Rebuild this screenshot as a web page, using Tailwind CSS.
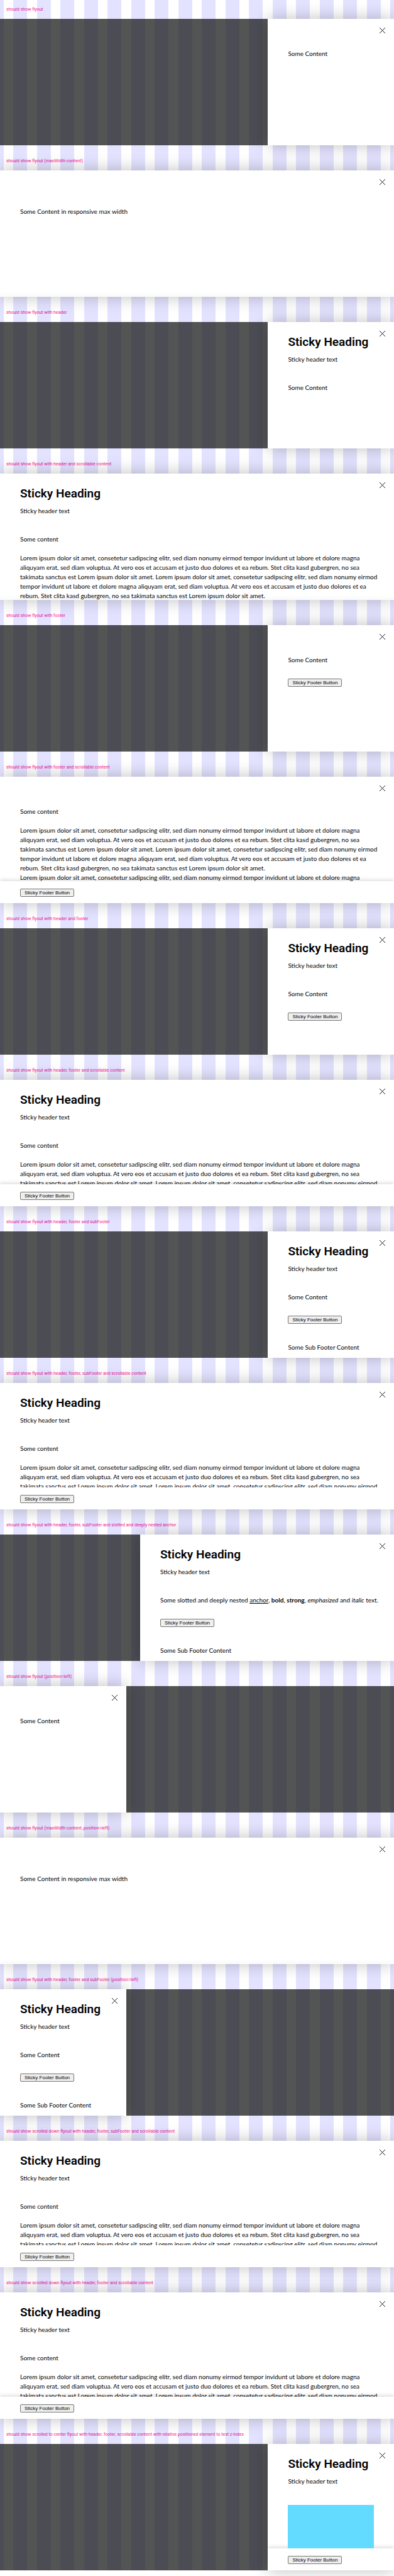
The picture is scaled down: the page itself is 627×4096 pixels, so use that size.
<!DOCTYPE html>
<html lang="en">
<head>
<meta charset="utf-8">
<meta name="viewport" content="width=device-width, initial-scale=1">
<title>Flyout</title>
<script src="https://cdn.jsdelivr.net/npm/@tailwindcss/browser@4"></script>
</head>
<body class="bg-white">
<svg class="hidden" aria-hidden="true"><symbol id="x" viewBox="0 0 15 15"><path d="M3 3 L12 12 M12 3 L3 12" fill="none" stroke="#010205" stroke-width="0.9"/></symbol></svg>

<main class="relative font-[Lato,sans-serif] text-[10px] leading-[15px] text-[#010205]
 [&>section>h1]:flex [&>section>h1]:h-[30px] [&>section>h1]:items-center [&>section>h1]:pl-[10px] [&>section>h1]:font-[Roboto,sans-serif] [&>section>h1]:text-[7px] [&>section>h1]:whitespace-nowrap [&>section>h1]:text-[#ff1493]
 [&>section>div]:relative [&>section>div]:z-10 [&>section>div]:mb-[10px] [&>section>div]:flex [&>section>div]:h-[201px] [&>section>div]:bg-[#1a1b1b]/75
 [&_aside]:relative [&_aside]:flex [&_aside]:flex-col [&_aside]:overflow-hidden [&_aside]:bg-white [&_aside]:whitespace-nowrap [&_aside]:shadow-[0_0_25px_rgba(0,0,0,0.26)]
 [&_header]:px-8 [&_header]:pt-5 [&_h2]:mb-2 [&_h2]:font-[Roboto,sans-serif] [&_h2]:text-[19px] [&_h2]:leading-6 [&_h2]:font-semibold
 [&_article]:px-8 [&_article]:pb-[10px] [&_header+article]:mt-[30px]
 [&_footer]:flex [&_footer]:bg-white [&_footer]:px-8 [&_footer]:pt-3 [&_footer]:pb-[10px]
 [&_footer_button]:h-[13px] [&_footer_button]:rounded-[2px] [&_footer_button]:border [&_footer_button]:border-[#767676] [&_footer_button]:bg-[#efefef] [&_footer_button]:px-[6px] [&_footer_button]:font-['Liberation_Sans',Arial,sans-serif] [&_footer_button]:text-[8px] [&_footer_button]:leading-[11px] [&_footer_button]:text-black
 [&_aside>button]:absolute [&_aside>button]:top-[11px] [&_aside>button]:right-[11px] [&_aside>button]:size-[15px] [&_aside>button>svg]:size-full">

<section><h1>should show flyout</h1><div class="justify-end"><aside class="w-[32%]">
<button type="button" aria-label="Close"><svg><use href="#x"/></svg></button>
<article class="mt-12"><p>Some Content</p></article>
</aside></div></section>

<section><h1>should show flyout (maxWidth content)</h1><div><aside class="w-full">
<button type="button" aria-label="Close"><svg><use href="#x"/></svg></button>
<article class="mt-[58px] flex-1"><p>Some Content in responsive max width</p></article>
<div class="h-px translate-y-px bg-white shadow-[0_-2px_6px_rgba(0,0,0,0.14)]"></div>
</aside></div></section>

<section><h1>should show flyout with header</h1><div class="justify-end"><aside class="w-[32%]">
<button type="button" aria-label="Close"><svg><use href="#x"/></svg></button>
<header><h2>Sticky Heading</h2><p>Sticky header text</p></header>
<article><p>Some Content</p></article>
</aside></div></section>

<section><h1>should show flyout with header and scrollable content</h1><div><aside class="w-full">
<button type="button" aria-label="Close"><svg><use href="#x"/></svg></button>
<header><h2>Sticky Heading</h2><p>Sticky header text</p></header>
<article class="min-h-0 flex-1"><p class="mb-[15px]">Some content</p>
<p>Lorem ipsum dolor sit amet, consetetur sadipscing elitr, sed diam nonumy eirmod tempor invidunt ut labore et dolore magna<br>aliquyam erat, sed diam voluptua. At vero eos et accusam et justo duo dolores et ea rebum. Stet clita kasd gubergren, no sea<br>takimata sanctus est Lorem ipsum dolor sit amet. Lorem ipsum dolor sit amet, consetetur sadipscing elitr, sed diam nonumy eirmod<br>tempor invidunt ut labore et dolore magna aliquyam erat, sed diam voluptua. At vero eos et accusam et justo duo dolores et ea<br>rebum. Stet clita kasd gubergren, no sea takimata sanctus est Lorem ipsum dolor sit amet.</p></article>
<div class="h-px translate-y-px bg-white shadow-[0_-2px_6px_rgba(0,0,0,0.14)]"></div>
</aside></div></section>

<section><h1>should show flyout with footer</h1><div class="justify-end"><aside class="w-[32%]">
<button type="button" aria-label="Close"><svg><use href="#x"/></svg></button>
<article class="mt-12"><p>Some Content</p></article>
<footer><button type="button">Sticky Footer Button</button></footer>
</aside></div></section>

<section><h1>should show flyout with footer and scrollable content</h1><div><aside class="w-full">
<button type="button" aria-label="Close"><svg><use href="#x"/></svg></button>
<article class="mt-12 min-h-0 flex-1"><p class="mb-[15px]">Some content</p>
<p>Lorem ipsum dolor sit amet, consetetur sadipscing elitr, sed diam nonumy eirmod tempor invidunt ut labore et dolore magna<br>aliquyam erat, sed diam voluptua. At vero eos et accusam et justo duo dolores et ea rebum. Stet clita kasd gubergren, no sea<br>takimata sanctus est Lorem ipsum dolor sit amet. Lorem ipsum dolor sit amet, consetetur sadipscing elitr, sed diam nonumy eirmod<br>tempor invidunt ut labore et dolore magna aliquyam erat, sed diam voluptua. At vero eos et accusam et justo duo dolores et ea<br>rebum. Stet clita kasd gubergren, no sea takimata sanctus est Lorem ipsum dolor sit amet.<br>Lorem ipsum dolor sit amet, consetetur sadipscing elitr, sed diam nonumy eirmod tempor invidunt ut labore et dolore magna</p></article>
<footer class="relative shadow-[0_-2px_6px_rgba(0,0,0,0.14)]"><button type="button">Sticky Footer Button</button></footer>
</aside></div></section>

<section><h1>should show flyout with header and footer</h1><div class="justify-end"><aside class="w-[32%]">
<button type="button" aria-label="Close"><svg><use href="#x"/></svg></button>
<header><h2>Sticky Heading</h2><p>Sticky header text</p></header>
<article><p>Some Content</p></article>
<footer><button type="button">Sticky Footer Button</button></footer>
</aside></div></section>

<section><h1>should show flyout with header, footer and scrollable content</h1><div><aside class="w-full">
<button type="button" aria-label="Close"><svg><use href="#x"/></svg></button>
<header><h2>Sticky Heading</h2><p>Sticky header text</p></header>
<article class="min-h-0 flex-1"><p class="mb-[15px]">Some content</p>
<p>Lorem ipsum dolor sit amet, consetetur sadipscing elitr, sed diam nonumy eirmod tempor invidunt ut labore et dolore magna<br>aliquyam erat, sed diam voluptua. At vero eos et accusam et justo duo dolores et ea rebum. Stet clita kasd gubergren, no sea<br>takimata sanctus est Lorem ipsum dolor sit amet. Lorem ipsum dolor sit amet, consetetur sadipscing elitr, sed diam nonumy eirmod</p></article>
<footer class="relative shadow-[0_-2px_6px_rgba(0,0,0,0.14)]"><button type="button">Sticky Footer Button</button></footer>
</aside></div></section>

<section><h1>should show flyout with header, footer and subFooter</h1><div class="justify-end"><aside class="w-[32%]">
<button type="button" aria-label="Close"><svg><use href="#x"/></svg></button>
<header><h2>Sticky Heading</h2><p>Sticky header text</p></header>
<article><p>Some Content</p></article>
<footer><button type="button">Sticky Footer Button</button></footer>
<p class="px-8 pt-5">Some Sub Footer Content</p>
</aside></div></section>

<section><h1>should show flyout with header, footer, subFooter and scrollable content</h1><div><aside class="w-full">
<button type="button" aria-label="Close"><svg><use href="#x"/></svg></button>
<header><h2>Sticky Heading</h2><p>Sticky header text</p></header>
<article class="min-h-0 flex-1"><p class="mb-[15px]">Some content</p>
<p>Lorem ipsum dolor sit amet, consetetur sadipscing elitr, sed diam nonumy eirmod tempor invidunt ut labore et dolore magna<br>aliquyam erat, sed diam voluptua. At vero eos et accusam et justo duo dolores et ea rebum. Stet clita kasd gubergren, no sea<br>takimata sanctus est Lorem ipsum dolor sit amet. Lorem ipsum dolor sit amet, consetetur sadipscing elitr, sed diam nonumy eirmod</p></article>
<footer class="relative"><button type="button">Sticky Footer Button</button></footer>
</aside></div></section>

<section><h1>should show flyout with header, footer, subFooter and slotted and deeply nested anchor</h1><div class="justify-end"><aside class="w-[404px]">
<button type="button" aria-label="Close"><svg><use href="#x"/></svg></button>
<header><h2>Sticky Heading</h2><p>Sticky header text</p></header>
<article><p>Some slotted and deeply nested <a href="#" class="underline">anchor</a>, <b>bold</b>, <strong>strong</strong>, <em>emphasized</em> and <i>italic</i> text.</p></article>
<footer><button type="button">Sticky Footer Button</button></footer>
<p class="px-8 pt-5">Some Sub Footer Content</p>
</aside></div></section>

<section><h1>should show flyout (position=left)</h1><div><aside class="w-[32%]">
<button type="button" aria-label="Close"><svg><use href="#x"/></svg></button>
<article class="mt-12"><p>Some Content</p></article>
</aside></div></section>

<section><h1>should show flyout (maxWidth content, position=left)</h1><div><aside class="w-full">
<button type="button" aria-label="Close"><svg><use href="#x"/></svg></button>
<article class="mt-[58px] flex-1"><p>Some Content in responsive max width</p></article>
<div class="h-px translate-y-px bg-white shadow-[0_-2px_6px_rgba(0,0,0,0.14)]"></div>
</aside></div></section>

<section><h1>should show flyout with header, footer and subFooter (position=left)</h1><div><aside class="w-[32%]">
<button type="button" aria-label="Close"><svg><use href="#x"/></svg></button>
<header><h2>Sticky Heading</h2><p>Sticky header text</p></header>
<article><p>Some Content</p></article>
<footer><button type="button">Sticky Footer Button</button></footer>
<p class="px-8 pt-5">Some Sub Footer Content</p>
</aside></div></section>

<section><h1>should show scrolled down flyout with header, footer, subFooter and scrollable content</h1><div><aside class="w-full">
<button type="button" aria-label="Close"><svg><use href="#x"/></svg></button>
<header><h2>Sticky Heading</h2><p>Sticky header text</p></header>
<article class="min-h-0 flex-1"><p class="mb-[15px]">Some content</p>
<p>Lorem ipsum dolor sit amet, consetetur sadipscing elitr, sed diam nonumy eirmod tempor invidunt ut labore et dolore magna<br>aliquyam erat, sed diam voluptua. At vero eos et accusam et justo duo dolores et ea rebum. Stet clita kasd gubergren, no sea<br>takimata sanctus est Lorem ipsum dolor sit amet. Lorem ipsum dolor sit amet, consetetur sadipscing elitr, sed diam nonumy eirmod</p></article>
<footer class="relative"><button type="button">Sticky Footer Button</button></footer>
</aside></div></section>

<section><h1>should show scrolled down flyout with header, footer and scrollable content</h1><div><aside class="w-full">
<button type="button" aria-label="Close"><svg><use href="#x"/></svg></button>
<header><h2>Sticky Heading</h2><p>Sticky header text</p></header>
<article class="min-h-0 flex-1"><p class="mb-[15px]">Some content</p>
<p>Lorem ipsum dolor sit amet, consetetur sadipscing elitr, sed diam nonumy eirmod tempor invidunt ut labore et dolore magna<br>aliquyam erat, sed diam voluptua. At vero eos et accusam et justo duo dolores et ea rebum. Stet clita kasd gubergren, no sea<br>takimata sanctus est Lorem ipsum dolor sit amet. Lorem ipsum dolor sit amet, consetetur sadipscing elitr, sed diam nonumy eirmod</p></article>
<footer class="relative shadow-[0_-2px_6px_rgba(0,0,0,0.14)]"><button type="button">Sticky Footer Button</button></footer>
</aside></div></section>

<section class="-mb-px"><h1>should show scrolled to center flyout with header, footer, scrollable content with relative positioned element to test z-index</h1><div class="justify-end"><aside class="w-[32%]">
<button type="button" aria-label="Close"><svg><use href="#x"/></svg></button>
<header><h2>Sticky Heading</h2><p>Sticky header text</p></header>
<article class="relative z-10 min-h-0 flex-1 pb-0!"><div class="h-full bg-[#63daff]"></div></article>
<footer class="relative shadow-[0_-2px_6px_rgba(0,0,0,0.14)]"><button type="button">Sticky Footer Button</button></footer>
</aside></div></section>

<!-- column grid drawn over the labels, under the flyouts -->
<div class="pointer-events-none absolute inset-0 bg-[linear-gradient(to_right,#0000ff1c_1%,transparent_1%,transparent_99%,#0000ff1c_99%)]"></div>
<div class="pointer-events-none absolute inset-y-0 left-[3.4%] right-[3.4%] grid grid-cols-16 gap-x-[2.63%] [&>i]:bg-[#0000ff1c]"><i></i><i></i><i></i><i></i><i></i><i></i><i></i><i></i><i></i><i></i><i></i><i></i><i></i><i></i><i></i><i></i></div>
</main>
</body>
</html>
